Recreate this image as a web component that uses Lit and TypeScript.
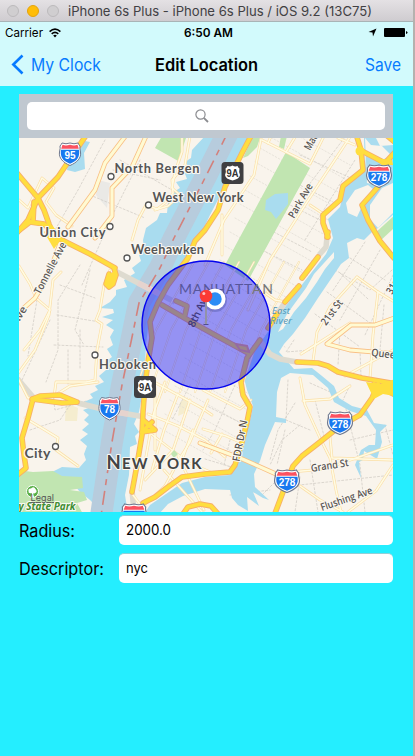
import { LitElement, html, svg, css } from "lit";
import { customElement } from "lit/decorators.js";

type Pts = string;

const MAJOR: Pts[] = [
  "87,134 58,177 38,198 28,220 16,234",
  "17,173 38,198 44,210 49,224 56,240",
  "34,202 33,222",
  "17,232 30,222 44,224 60,239 90,254 115,268",
  "125,138",
  "252,134 242,153 225,187 218,210 205,230 195,241 188,258 168,285 158,303 150,322 152,338 148,362 145,385 143,412 142,435 137,465 132,492",
  "328,232 327,237",
  "318,257 302,278",
  "299,286 285,302",
  "277,314 268,328",
  "260,340 247,358 241,382 243,395 250,407 247,422 242,442 235,465 230,472 205,474 182,477 168,487 155,497 143,503",
  "356,134 361,150 363,170 343,186 340,200 323,215 323,223 328,237",
  "378,187 362,205 368,220 380,241 393,257 397,261",
  "360,150 385,163 397,150",
  "385,134 397,144",
  "162,305 188,320 215,335 248,353",
  "176,301 187,306 185,315",
  "297,362 318,363 328,366 338,372 362,378 397,384",
  "378,384 372,398 360,415 340,426 320,442 302,456 293,466 283,492 274,516",
  "374,384 397,396",
  "77,402 62,403 32,399 40,396 60,395 77,402",
  "33,399 28,418 22,438 24,455 26,468 16,476",
  "143,420 155,430 142,432 152,422",
  "183,514 188,507 200,504 211,506 219,515",
].filter((p) => p.includes(" "));
const LOOPS: Pts[] = ["114,268 116,275 113,284 109,287 106,284 109,274"];
const LIGHT: Pts[] = [
  "127,134 105,163 95,190 68,227",
  "147,134 132,167 112,188 112,216 95,238",
  "62,238 48,276 35,298 17,314",
  "200,443 240,458 276,474",
  "397,317 375,325 351,325 327,344 350,350 397,354",
];
const MINOR: Pts[] = [
  "190,136 185,165 172,180 173,193 165,203 157,209 146,205 138,220 132,240",
  "182,138 182,152 175,172 172,188 180,195 168,206 155,210",
  "19,200 28,208 42,178 54,188 46,202 56,215 72,226",
  "19,266 30,284 36,298 50,310 40,330 24,350",
  "17,375 35,350 49,315 53,280 61,272",
  "110,270 104,285 100,310 96,320 102,324 97,350 95,380 86,382 56,382 54,397",
  "25,418 45,430 58,438 56,450 78,466",
  "19,380 28,398 54,396 70,386 98,382",
  "262,140 310,164 325,134",
  "352,134 305,205 270,260 248,310",
  "286,152 297,134", "268,143 272,134",
  "261,139 254,175 224,220 205,265",
  "222,215 222,255",
  "310,205 325,215", "338,138 355,145",
  "265,293 275,300 286,302",
  "357,277 330,307 317,332 313,361",
  "357,277 378,292 393,301",
  "378,292 373,335 370,378",
  "301,354 350,323 328,343 350,350",
  "345,376 393,350",
  "300,378 305,405 320,438 330,458 336,490 341,512",
  "330,437 332,458 393,460",
  "290,472 325,469 393,445",
  "303,401 330,399 350,386",
  "300,486 320,500 343,512",
  "393,465 376,491 348,512",
  "203,390 240,409 251,400",
  "203,429 226,436 240,442",
  "222,434 211,453", "165,382 154,412 140,490",
  "178,394 164,430 152,470", "154,382 200,407 212,415",
  "148,414 178,426 205,440 225,457",
  "190,400 173,450 145,480", "208,400 190,442 180,458 165,486",
  "164,470 202,512", "178,456 204,510", "133,495 142,507 165,486",
  "155,388 155,450", "146,430 185,460", "193,430 182,460 215,474",
];
const AVENUES: Pts[] = Array.from({ length: 8 }, (_, i) => {
  const x = 160 + i * 15;
  return `${x + 34},262 ${x - 4},330 ${x - 25},392`;
});
const DOTTED: Pts[] = [
  "105,140 78,190 55,230", "113,170 160,180", "120,160 172,190", "90,195 145,218",
  "140,160 112,216 82,285", "80,265 58,300 58,350 46,382", "90,270 75,330 84,345",
  "60,285 95,298", "57,315 100,322", "54,345 103,347", "68,350 68,385", "80,330 80,370",
  "90,400 55,410 53,395", "37,300 28,356", "50,320 22,380", "30,430 60,420 70,405",
  "305,190 345,137", "285,235 340,153", "305,240 355,160", "300,155 355,180",
  "290,180 333,202", "280,200 320,220", "270,230 312,252", "262,250 302,270",
  "350,258 385,280", "340,273 368,299", "327,292 370,323", "315,314 360,347",
  "380,250 340,320", "365,242 332,292", "393,275 365,335", "335,270 370,290 392,270",
  "294,340 286,352 311,350", "340,330 338,365", "360,350 361,377", "384,305 380,350",
  "288,380 286,420 310,430", "295,403 278,430 270,460", "315,400 325,440",
  "345,405 360,465 365,512", "285,430 277,465", "300,425 282,440 270,465",
  "290,486 393,475", "310,460 318,512", "262,495 274,483", "300,477 295,512",
  "385,425 393,455", "350,440 393,430", "350,385 343,400", "310,383 337,395",
  "205,405 245,425", "190,385 172,420", "235,385 215,430 203,450",
  "205,459 235,468", "224,465 230,440", "230,495 270,490",
];

@customElement("map-view")
class MapView extends LitElement {
  static styles = css`
    :host { display: block; width: 374px; height: 374px; }
    svg { display: block; }
    polyline, .line { fill: none; stroke-linejoin: round; stroke-linecap: round; }
    .water { fill: #a9dcef; }
    .land { fill: #f9f4ec; }
    .green { fill: #c1e5b1; }
    .mCase { stroke: #f7b068; stroke-width: 5.6; }
    .mFill { stroke: #ffde3e; stroke-width: 3.8; }
    .lCase { stroke: #f9bf83; stroke-width: 4.8; }
    .lFill { stroke: #fffad2; stroke-width: 3.2; }
    .nCase { stroke: #fbdfa8; stroke-width: 2.8; }
    .nFill { stroke: #fffbe3; stroke-width: 1.5; }
    .aCase { stroke: #f7dfae; stroke-width: 2; }
    .aFill { stroke: #fffbe6; stroke-width: 1; }
    .dot { stroke: #d3cec6; stroke-width: 0.8; stroke-dasharray: 2 2; }
    .street { stroke: #e0dbd3; stroke-width: 0.7; stroke-dasharray: 1.5 2; }
    .tunnel { stroke: #dedbd0; stroke-width: 5.5; stroke-linecap: butt; }
    .cross { stroke: #e6d3ce; }
    .border { stroke: #b7ccdd; stroke-width: 22; stroke-linecap: butt; }
    .dash { stroke: #d3817c; stroke-width: 1.6; stroke-dasharray: 14 6 6 6; stroke-linecap: butt; }
    text { font-family: Lato, "Open Sans", sans-serif; paint-order: stroke; stroke: #fbf8f2; stroke-width: 2.2; stroke-linejoin: round; fill: #555; }
    .town { font-size: 12.8px; font-weight: 700; }
    .city { font-weight: 700; fill: #444; font-size: 18.5px; }
    .small { font-size: 15px; }
    .road { font-family: "Open Sans", sans-serif; font-size: 10.5px; font-weight: 600; fill: #5a5653; }
    .inside { fill: #3e3880; stroke: none; }
    .district { fill: #57569b; font-size: 14px; stroke: none; }
    .outer { fill: #777; }
    .river { fill: #4f94b5; font-family: "Open Sans", sans-serif; font-size: 9.5px; font-style: italic; stroke: none; }
    .park { fill: #3f8f33; font-family: "Open Sans", sans-serif; font-weight: 700; font-style: italic; font-size: 10px; }
    .legal { font-family: Inter, sans-serif; font-size: 9px; fill: #555; stroke: none; text-decoration: underline; }
    .num { font-family: "Liberation Sans", sans-serif; font-weight: 700; font-size: 10px; fill: #fff; stroke: none; text-anchor: middle; }
    .numDark { fill: #333; font-size: 11px; }
    .place { fill: #fff; stroke: #555; stroke-width: 1.3; }
    .radius { fill: rgba(0, 0, 255, 0.4); stroke: #0303ee; stroke-width: 1.4; }
  `;

  private lines(list: Pts[], cls: string) {
    return list.map((p) => svg`<polyline class=${cls} points=${p}></polyline>`);
  }

  private shield(x: number, y: number, n: string) {
    const k = n.length > 2 ? 1.17 : 1;
    return svg`<g transform="translate(${x} ${y})">
      <g transform="scale(${k} 1)">
        <path d="M-8-11Q-4-9.5 0-11Q4-9.5 8-11Q9-9 10-8Q9.5-6 10.5-2C11.5 4 7 8.500 0 11.500C-7 8.500-11.500 4-10.500-2Q-9.500-6-10-8Q-9-9-8-11Z" fill="#fff" stroke="#70798f" stroke-width="1"></path>
        <path d="M-7.500-9.200Q-4-8 0-9.300Q4-8 7.500-9.200L8.800-5.200H-8.800Z" fill="#fb5260"></path>
        <path d="M-9-4.200H9C10 3 7.500 6.800 0 9.800C-7.500 6.800-10 3-9-4.200Z" fill="#1878ef"></path>
      </g>
      <text class="num" x="0" y="4.500">${n}</text></g>`;
  }

  private route(x: number, y: number) {
    return svg`<g transform="translate(${x} ${y})">
      <rect x="-11" y="-11" width="22" height="22" rx="3.500" fill="#3f3f42"></rect>
      <path d="M-5-7Q-2.500-6 0-7.500Q2.500-6 5-7Q6-5 7-4.500Q6-1 7.500 2Q7 6 0 7.500Q-7 6-7.500 2Q-6-1-7-4.500Q-6-5-5-7Z" fill="#fff"></path>
      <text class="num numDark" x="0" y="4" textLength="12" lengthAdjust="spacingAndGlyphs">9A</text></g>`;
  }

  private town(x: number, y: number, w: number, t: string) {
    return svg`<text class="town" x=${x} y=${y} textLength=${w}>${t}</text>`;
  }

  private road(x: number, y: number, a: number, w: number, t: string) {
    return svg`<text class="road" transform="translate(${x} ${y}) rotate(${a})" textLength=${w} lengthAdjust="spacingAndGlyphs">${t}</text>`;
  }

  render() {
    const river = "228,132 206,176 174,238 160,268 139,303 131,342 122,385 112,442 101,516";
    const streets = Array.from({ length: 23 }, (_, i) => {
      const y = 120 + i * 14;
      return `${270 - i * 5},${y} ${350 - i * 5},${y + 45}`;
    });
    return html`<svg width="374" height="374" viewBox="19 138 374 374">
      <rect class="land" x="19" y="138" width="374" height="374"></rect>
      <polygon points="98,180 110,183 107,208 96,195" fill="#eae9e6"></polygon>
      <polygon points="66,403 78,408 77,421 65,421" fill="#f5edcf"></polygon>
      <polygon points="180,402 188,397 187,412 178,416" fill="#f5edcf"></polygon>
      ${this.lines(streets, "street")}
      ${this.lines(DOTTED, "dot")}
      <polygon class="green" points="162,136 186,138 182,150 180,162 155,148"></polygon>
      <polygon class="green" points="281,136 287,136 284,149 279,147"></polygon>
      <polygon class="green" points="286,152 310,168 272,237 248,281 225,265 240,237"></polygon>
      <path class="water" d="M266 200L275 194L288 193L288 204L281 213L276 219L271 212L265 210Z"></path>
      <polygon class="water" points="85,141 90,142 84,153 85,169 75,172 67,170 68,164"></polygon>
      <polygon class="green" points="252,138 260,138 257,147 248,156 243,158"></polygon>

      <polygon class="water" points="205,136 192,150 191,158 185,162 190,168 184,171 187,179 176,182 180,188 172,193 177,200 168,203 167,213 160,213 157,220 146,228 143,240 144,249 139,255 141,261 132,268 135,273 124,280 127,287 116,290 116,295 110,302 100,308 113,309 114,313 102,317 113,320 106,325 114,330 110,337 113,345 107,349 112,357 105,362 106,370 99,376 104,382 95,386 98,390 90,394 93,398 82,403 94,406 83,410 89,415 84,420 89,424 82,430 88,434 80,440 87,446 84,454 86,460 79,468 62,467 52,472 55,477 70,480 80,492 90,500 104,514 128,514 125,495 129,475 130,447 137,444 135,436 139,432 134,424 139,412 144,385 146,345 148,328 158,305 172,282 188,255 198,240 210,215 222,192 238,157 250,136"></polygon>
      <polygon class="green" points="17,470 33,472 53,471 62,476 82,477 83,488 70,490 84,492 87,500 77,503 83,514 17,514"></polygon>
      <polyline class="border" points=${river}></polyline>

      <polygon class="water" points="364,138 376,138 380,146 393,145 395,213 378,228 372,232 364,240 357,238 347,243 349,258 341,264 335,273 318,298 305,318 293,334 284,344 279,352 294,369 312,368 322,376 334,386 339,398 352,406 367,410 374,423 387,425 380,432 382,442 377,459 364,451 363,460 359,462 361,478 355,465 361,450 369,445 375,445 376,430 366,416 350,411 334,402 328,388 313,375 290,373 281,378 277,392 276,417 286,419 286,423 275,422 265,445 260,461 254,474 255,487 269,500 263,498 253,492 259,506 247,497 248,511 238,505 232,498 230,490 205,489 183,496 168,504 159,514 144,514 150,505 182,483 205,477 230,475 238,464 243,443 250,420 253,406 247,390 244,378 250,358 265,336 285,307 304,282 326,254 333,238 328,219 340,207 345,187 365,170"></polygon>
      <polygon class="land" points="348,213 346,203 355,190 368,185 373,189 363,204 357,217"></polygon>
      <polygon class="land" points="370,205 382,188 395,182 395,211 378,228 370,219"></polygon>
      <polygon class="land" points="365,138 371,145 382,146 392,156 381,160 365,155 366,169 376,185 367,183"></polygon>
      <polygon class="green" points="395,215 395,227 379,242 374,234"></polygon>
      <polygon class="land" points="334,252 334,258 325,269 317,282 306,298 294,312 283,329 278,332 287,314 306,288 314,274"></polygon>
      <polyline class="tunnel" points="78,403 110,411 145,417"></polyline>
      <polyline class="tunnel" points="115,271 146,287 175,302"></polyline>
      <polyline class="tunnel cross" points="108,410.500 128,414"></polyline>
      <polyline class="tunnel cross" points="138,283 158,293"></polyline>
      <polyline class="tunnel" points="16,377 33,397"></polyline>
      <polyline class="tunnel" points="260,341 270,354 280,359 297,362"></polyline>
      <polyline class="tunnel" points="327,237 326,247 319,255"></polyline>
      <polyline class="tunnel" points="286,301 277,314"></polyline>
      <polyline class="tunnel" points="132,490 134,512"></polyline>
      <polyline class="dash" points=${river}></polyline>

      ${this.lines(AVENUES, "aCase")} ${this.lines(AVENUES, "aFill")}
      ${this.lines(MINOR, "nCase")} ${this.lines(MINOR, "nFill")}
      ${this.lines(LIGHT, "lCase")} ${this.lines(LIGHT, "lFill")}
      ${this.lines([...MAJOR, ...LOOPS], "mCase")} ${this.lines([...MAJOR, ...LOOPS], "mFill")}
      <polygon points="44,232 52,225 62,238 54,249" fill="#ffde3e"></polygon>
      <polygon points="107,276 116,270 115,284 109,288 105,285" fill="#ffde3e"></polygon>
      <polygon points="366,382 380,384 395,379 395,396 383,394 374,399" fill="#ffde3e"></polygon>
      <polygon points="373,158 392,160 393,165 382,165" fill="#ffde3e"></polygon>
      <circle cx="360" cy="151" r="4.500" fill="#ffde3e"></circle>
      <path d="M236 344L247 346L249 352L240 350Z" fill="#ffde3e" stroke="#f7b068" stroke-width="2"></path>
      <polygon class="green" points="174,450 178,454 174,458 171,454"></polygon>

      ${this.shield(70, 154, "95")}
      ${this.shield(379, 176, "278")}
      ${this.shield(340, 423, "278")}
      ${this.shield(287, 481, "278")}
      ${this.shield(109.500, 408.500, "78")}
      ${this.shield(134, 515, "478")}
      ${this.route(232.500, 173)} ${this.route(145, 387)}

      ${this.town(114.500, 172.500, 85, "North Bergen")}
      ${this.town(152.500, 201.500, 91, "West New York")}
      ${this.town(39.500, 237, 66, "Union City")}
      ${this.town(131, 254, 73, "Weehawken")}
      ${this.town(99, 369, 57, "Hoboken")}
      <text class="town" x="24.500" y="458" textLength="26" style="font-size:14px">City</text>
      ${[[111, 176.500], [148.500, 205], [110, 226.500], [127, 258], [95, 355], [55.500, 446.500]].map(
        ([x, y]) => svg`<circle class="place" cx=${x} cy=${y} r="3"></circle>`)}
      ${this.road(40, 295, -62, 57, "Tonnelle Ave")}
      ${this.road(17, 326, -59, 20, "Ave")}
      ${this.road(294, 219, -60, 38, "Park Ave")}
      ${this.road(310, 151, -61, 52, "Madison Ave")}
      ${this.road(326, 326, -53, 29, "21st St")}
      ${this.road(392, 295, -60, 18, "31st")}
      ${this.road(239.500, 462, -79, 42, "FDR Dr N")}
      ${this.road(311.500, 472, -9, 38, "Grand St")}
      ${this.road(322, 511, -19, 54, "Flushing Ave")}
      ${this.road(371, 356, 6, 56, "Queens Blvd")}
      <text class="city" x="106.500" y="469" textLength="95">N<tspan class="small">EW</tspan> Y<tspan class="small">ORK</tspan></text>
      <text class="river" x="272" y="314" textLength="18">East</text>
      <text class="river" x="270" y="323.500" textLength="22">River</text>
      <circle cx="32.500" cy="491.500" r="6" fill="#58af46" stroke="#fff" stroke-width="1"></circle>
      <path d="M32 493Q28 494 28.500 491Q28 488 31 488.500Q34 486 35.500 489Q38 492 35 493Q34 494 33 493L34 497H31Z" fill="#fff"></path>
      <text class="park" x="18.500" y="509.500" textLength="57" lengthAdjust="spacingAndGlyphs">y State Park</text>
      <text class="legal" x="30.500" y="501" textLength="23.500">Legal</text>

      <circle class="radius" cx="206" cy="325" r="64"></circle>
      <text class="district" x="179" y="293.500" textLength="94">MANHATT<tspan class="outer">AN</tspan></text>
      <text class="road inside" transform="translate(194 328) rotate(-64)" textLength="36">8th Ave</text>
      <circle cx="215" cy="300" r="12" fill="#24306e" opacity=".25"></circle>
      <circle cx="215" cy="299" r="10.500" fill="#fff"></circle>
      <circle cx="215" cy="299" r="6.700" fill="#2c8cf5"></circle>
      <path d="M206 300V324" stroke="#9193a0" stroke-width="1.800"></path>
      <path d="M203.500 324.500H208.500" stroke="#504c92" stroke-width="1"></path>
      <circle cx="206" cy="296" r="6.300" fill="#fb3a35"></circle>
      <circle cx="203.800" cy="293.500" r="1.500" fill="#ffc2bd"></circle>
    </svg>`;
  }
}

@customElement("app-root")
class AppRoot extends LitElement {
  static styles = css`
    :host { display: block; width: 415px; height: 756px; overflow: hidden; font-family: Inter, "Liberation Sans", sans-serif; color: #000; }
    .desktop { display: flex; height: 756px; background: #b5b1ae; }
    .window { width: 413px; height: 756px; background: #24eeff; display: flex; flex-direction: column; }
    .title { box-sizing: border-box; height: 22px; flex: none; display: flex; align-items: center; gap: 8px; padding-left: 7px; background: linear-gradient(#e4e1e4, #cfccd0); border-bottom: 1px solid #a9b4b6; color: #414043; font-size: 13px; }
    .light { width: 10px; height: 10px; border: 1px solid #bcbabc; border-radius: 50%; background: #d0ced0; }
    .amber { background: #ffbd08; border-color: #e5a30c; }
    .title .name { margin-left: 1px; padding-top: 2px; white-space: nowrap; }
    .chrome { height: 64px; flex: none; background: #d2fafc; display: flex; flex-direction: column; }
    .status { height: 21px; display: grid; grid-template-columns: 1fr auto 1fr; align-items: center; padding: 0 5px 0 5px; font-size: 12px; }
    .carrier { display: flex; align-items: center; gap: 6px; }
    .time { font-weight: 600; font-size: 12px; padding-left: 3px; }
    .right { display: flex; justify-content: flex-end; align-items: center; gap: 7px; }
    .nav { height: 43px; display: grid; grid-template-columns: 1fr auto 1fr; align-items: center; padding: 0 12px 0 11px; font-size: 17px; }
    .back { display: flex; align-items: center; gap: 7px; color: #077aff; }
    .heading { font-weight: 600; padding-left: 1px; }
    .save { display: flex; justify-content: flex-end; color: #077aff; }
    .content { padding: 8px 0 0 19px; width: 374px; }
    .search { height: 44px; box-sizing: border-box; padding: 8px; background: #c0c8d0; }
    .field { height: 28px; border-radius: 5px; background: #fff; display: flex; align-items: center; justify-content: center; padding-right: 8px; box-sizing: border-box; }
    .form { display: grid; grid-template-columns: 100px 274px; row-gap: 8px; padding-top: 3px; align-items: center; }
    .label { font-size: 17px; white-space: nowrap; }
    .input { box-sizing: border-box; height: 30px; border-radius: 5px; background: #fff; border-top: 1px solid #8fd0d8; display: flex; align-items: center; padding: 0 0 2px 7px; font-size: 14px; }
    .fit { display: block; overflow: visible; }
    .fit text { font-family: Inter, "Liberation Sans", sans-serif; fill: currentColor; }
  `;

  private fit(text: string, width: number, size: number) {
    return html`<svg class="fit" width=${width} height=${size + 4}>
      <text x="0" y=${size} font-size=${size} textLength=${width} lengthAdjust="spacingAndGlyphs">${text}</text>
    </svg>`;
  }

  render() {
    return html`<div class="desktop"><div class="window">
      <div class="title">
        <span class="light"></span><span class="light amber"></span><span class="light"></span>
        <span class="name">${this.fit("iPhone 6s Plus - iPhone 6s Plus / iOS 9.2 (13C75)", 304, 13)}</span>
      </div>
      <div class="chrome">
        <div class="status">
          <span class="carrier">${this.fit("Carrier", 38, 12)}
            <svg width="12" height="10" viewBox="0 0 12 10" fill="none" stroke="#000" stroke-width="1.600"><path d="M.6 3.700Q6-1.300 11.400 3.700M2.700 5.900Q6 2.900 9.300 5.900"></path><path d="M4.200 7.400Q6 6 7.800 7.400L6 9.400Z" fill="#000" stroke="none"></path></svg>
          </span>
          <span class="time">${this.fit("6:50 AM", 49, 12)}</span>
          <span class="right">
            <svg width="9" height="9" viewBox="0 0 9 9"><path d="M8.500.5L5 8.500L4.500 4.600L.5 4.100Z"></path></svg>
            <svg width="24" height="9" viewBox="0 0 24 9"><rect width="21" height="9" rx="1"></rect><path d="M22 3Q23.500 3.500 23.500 4.500Q23.500 5.500 22 6Z"></path></svg>
          </span>
        </div>
        <div class="nav">
          <span class="back"><svg width="13" height="21" viewBox="0 0 13 21"><path d="M11.500 1.500L2.300 10.500L11.500 19.500" fill="none" stroke="#077aff" stroke-width="2.600"></path></svg>${this.fit("My Clock", 70, 17)}</span>
          <span class="heading">${this.fit("Edit Location", 103, 17)}</span>
          <span class="save">${this.fit("Save", 36, 17)}</span>
        </div>
      </div>
      <div class="content">
        <div class="search"><div class="field">
          <svg width="14" height="14" viewBox="0 0 14 14" fill="none" stroke="#8b8c90"><circle cx="5.500" cy="5.500" r="4.600" stroke-width="1.200"></circle><path d="M8.800 8.800L13 13" stroke-width="1.800"></path></svg>
        </div></div>
        <map-view></map-view>
        <div class="form">
          <span class="label">${this.fit("Radius:", 56, 17)}</span><span class="input">${this.fit("2000.0", 45, 14)}</span>
          <span class="label">${this.fit("Descriptor:", 85, 17)}</span><span class="input">${this.fit("nyc", 22, 14)}</span>
        </div>
      </div>
    </div></div>`;
  }
}
